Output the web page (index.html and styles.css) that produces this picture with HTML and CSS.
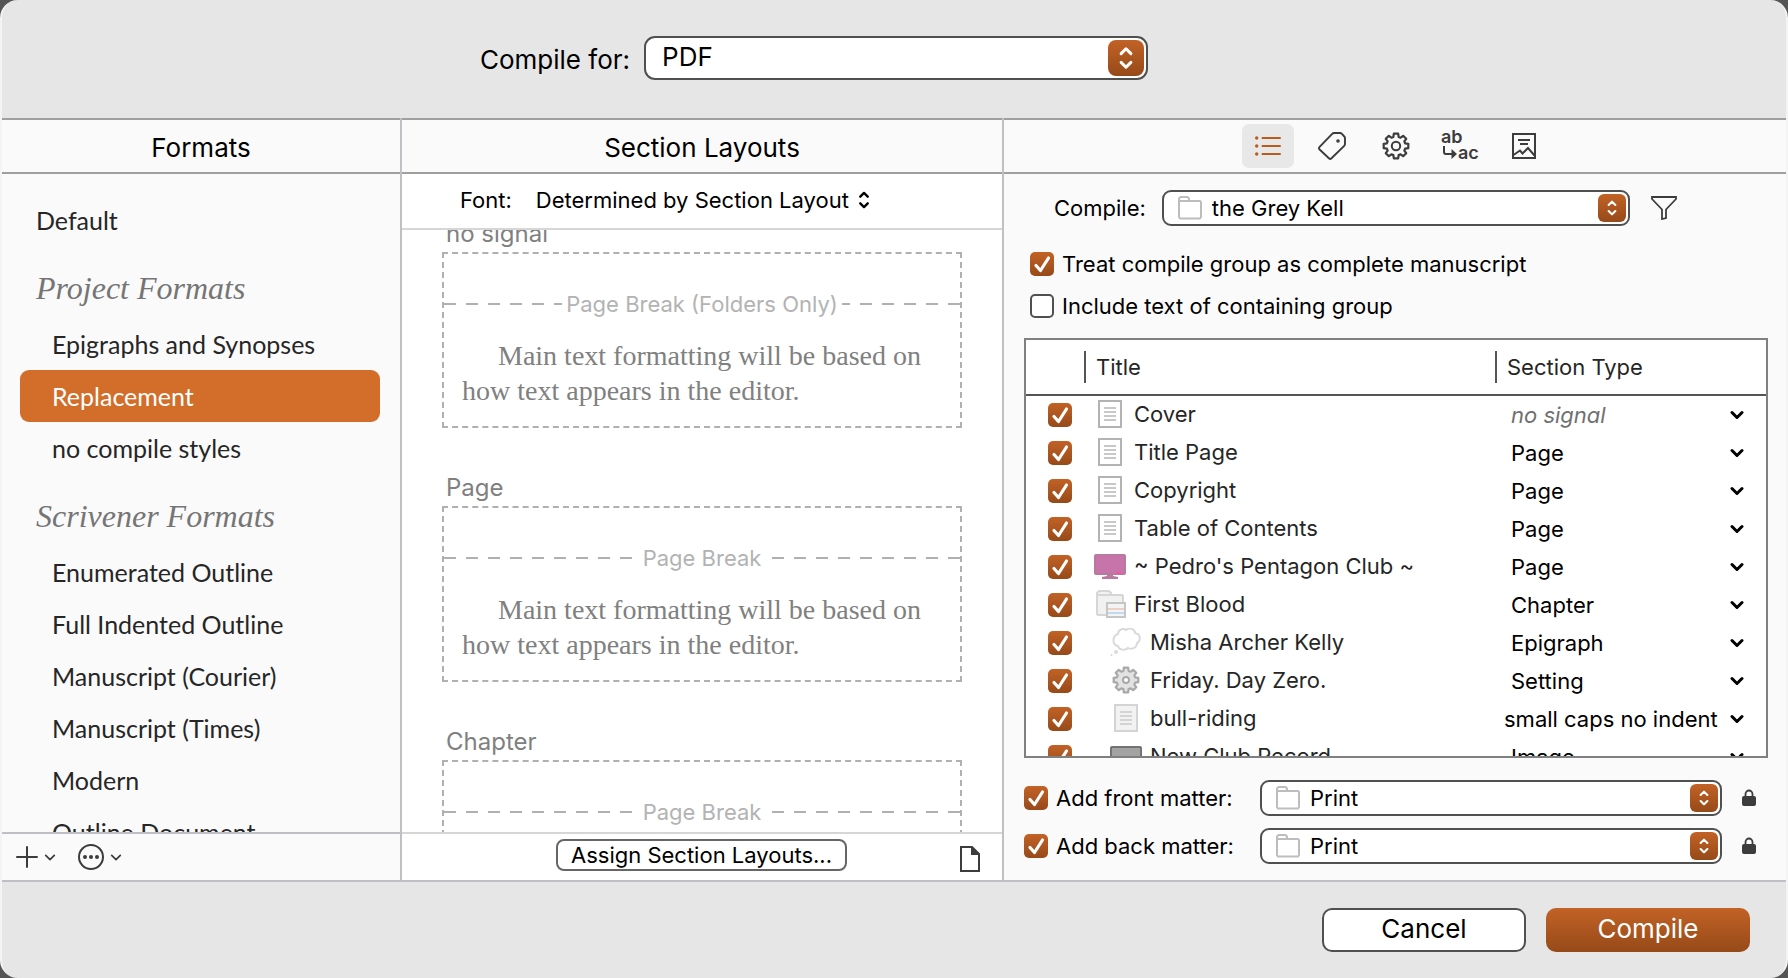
FILE: index.html
```html
<!DOCTYPE html>
<html lang="en">
<head>
  <meta charset="UTF-8" />
  <meta name="viewport" content="width=device-width, initial-scale=1.0" />
  <title>Compile</title>
  <link rel="stylesheet" href="styles.css">
</head>
<body>
  <!-- shared icons -->
  <svg class="defs" aria-hidden="true">
    <symbol id="i-updown" viewBox="0 0 14 24"><path d="M2.5 8 7 3.5 11.5 8M2.5 16 7 20.5 11.5 16" fill="none" stroke="currentColor" stroke-width="2.8" stroke-linecap="round" stroke-linejoin="round" /></symbol>
    <symbol id="i-down" viewBox="0 0 14 10"><path d="M2 2.5 7 7.5 12 2.5" fill="none" stroke="currentColor" stroke-linecap="round" stroke-linejoin="round" /></symbol>
    <symbol id="i-folder" viewBox="0 0 24 24"><path d="M1 21V2.5L2.5 1h7L11 2.5V5h11l1 1v15l-1 1.500H2z" fill="#fff" stroke="#bdbdbd" stroke-width="2" stroke-linejoin="round" /><path d="M1 5h11" stroke="#bdbdbd" stroke-width="2" /></symbol>
    <symbol id="i-doc" viewBox="0 0 24 28"><path d="M1 1h22v26H1z" fill="#fff" stroke="#b3b3b3" stroke-width="2" /><path d="M6 8h12M6 12h12M6 16h12M6 20h12" stroke="#c8c8c8" stroke-width="2" /></symbol>
    <symbol id="i-gear" viewBox="-14 -14 28 28"><path d="M9.130-2.620 12.300-2.170V2.170L9.130 2.620 8.310 4.600 10.230 7.160 7.160 10.230 4.600 8.310 2.620 9.130 2.170 12.300H-2.170L-2.620 9.130-4.600 8.310-7.160 10.230-10.230 7.160-8.310 4.600-9.130 2.620-12.300 2.170V-2.170L-9.130-2.620-8.310-4.600-10.230-7.160-7.160-10.230-4.600-8.310-2.620-9.130-2.170-12.300H2.170L2.620-9.130 4.600-8.310 7.160-10.230 10.230-7.160 8.310-4.600z" stroke="currentColor" stroke-width="2.200" stroke-linejoin="round" /></symbol>
    <symbol id="i-lock" viewBox="0 0 14 18"><path d="M3.500 8V5a3.500 3.500 0 0 1 7 0v3" fill="none" stroke="#3c3c3c" stroke-width="1.800" /><rect y="7" width="14" height="10" rx="2" fill="#3c3c3c" /></symbol>
  </svg>

  <div class="window">
    <header class="topbar">
      <label for="format">Compile for:</label>
      <div class="popup popup-large">
        <select id="format"><option>PDF</option></select>
        <span class="stepper"><svg width="18" height="26"><use href="#i-updown" /></svg></span>
      </div>
    </header>

    <main class="panes">
      <section class="pane formats">
        <h2 class="pane-title">Formats</h2>
        <nav class="format-list">
          <a href="#" class="format top">Default</a>
          <h3>Project Formats</h3>
          <a href="#" class="format">Epigraphs and Synopses</a>
          <a href="#" class="format selected">Replacement</a>
          <a href="#" class="format">no compile styles</a>
          <h3>Scrivener Formats</h3>
          <a href="#" class="format">Enumerated Outline</a>
          <a href="#" class="format">Full Indented Outline</a>
          <a href="#" class="format">Manuscript (Courier)</a>
          <a href="#" class="format">Manuscript (Times)</a>
          <a href="#" class="format">Modern</a>
          <a href="#" class="format">Outline Document</a>
        </nav>
        <div class="pane-bar">
          <button type="button" class="icon-btn" aria-label="Add format">
            <svg width="22" height="22" viewBox="0 0 22 22"><path d="M11 1v20M1 11h20" stroke="#3c3c3c" stroke-width="2" stroke-linecap="round" /></svg>
            <svg class="chev" width="12" height="9"><use href="#i-down" /></svg>
          </button>
          <button type="button" class="icon-btn" aria-label="Format options">
            <svg width="26" height="26" viewBox="0 0 26 26"><circle cx="13" cy="13" r="12" fill="none" stroke="#3c3c3c" stroke-width="2" /><g fill="#3c3c3c"><circle cx="7" cy="13" r="2" /><circle cx="13" cy="13" r="2" /><circle cx="19" cy="13" r="2" /></g></svg>
            <svg class="chev" width="12" height="9"><use href="#i-down" /></svg>
          </button>
        </div>
      </section>

      <section class="pane layouts">
        <h2 class="pane-title">Section Layouts</h2>
        <div class="font-bar">
          <label for="font">Font:</label>
          <span class="font-select">
            <select id="font"><option>Determined by Section Layout</option></select>
            <svg width="12" height="20"><use href="#i-updown" /></svg>
          </span>
        </div>
        <div class="previews">
          <article class="preview">
            <h4>no signal</h4>
            <div class="page">
              <div class="page-break tight">Page Break (Folders Only)</div>
              <p>Main text formatting will be based on how text appears in the editor.</p>
            </div>
          </article>
          <article class="preview">
            <h4>Page</h4>
            <div class="page">
              <div class="page-break">Page Break</div>
              <p>Main text formatting will be based on how text appears in the editor.</p>
            </div>
          </article>
          <article class="preview">
            <h4>Chapter</h4>
            <div class="page">
              <div class="page-break">Page Break</div>
            </div>
          </article>
        </div>
        <div class="pane-bar">
          <button type="button" class="assign">Assign Section Layouts...</button>
          <button type="button" class="icon-btn page-btn" aria-label="Page preview">
            <svg width="20" height="26" viewBox="0 0 20 26"><path d="M1 1h11l7 7v17H1z" fill="none" stroke="#3c3c3c" stroke-width="2" /><path d="M11 0v9h9z" fill="#3c3c3c" /></svg>
          </button>
        </div>
      </section>

      <section class="pane contents">
        <div class="pane-title tabs">
          <button type="button" class="tab active" aria-label="Contents">
            <svg width="26" height="20" viewBox="0 0 26 20"><path d="M7.500 2h17.500M7.500 10h17.500M7.500 18h17.500" stroke="#b95b1f" stroke-width="2" stroke-linecap="round" /><g fill="#b95b1f"><circle cx="1.700" cy="2" r="1.700" /><circle cx="1.700" cy="10" r="1.700" /><circle cx="1.700" cy="18" r="1.700" /></g></svg>
          </button>
          <button type="button" class="tab" aria-label="Metadata">
            <svg width="28" height="28" viewBox="0 0 28 28"><path d="M16 1h6q1 0 1.700.7l2.600 2.800Q27 5.200 27 6.200V12q0 1-.8 1.800L13.500 26.300q-1.300 1.200-2.600 0L1.600 17.500q-1.200-1.300 0-2.600L14.200 1.800Q15 1 16 1z" fill="none" stroke="#3c3c3c" stroke-width="1.900" stroke-linejoin="round" /><circle cx="20" cy="9" r="1.800" fill="#3c3c3c" /></svg>
          </button>
          <button type="button" class="tab" aria-label="Options">
            <svg class="gear-line" width="28" height="28"><use href="#i-gear" /><circle cx="14" cy="14" r="4.200" fill="none" stroke="#3c3c3c" stroke-width="2" /></svg>
          </button>
          <button type="button" class="tab" aria-label="Replacements">
            <svg width="38" height="32" viewBox="0 0 38 32"><text x="0" y="13" class="glyph">ab</text><text x="17" y="29" class="glyph">ac</text><path d="M3 16v6q0 2 2 2h7" fill="none" stroke="#3c3c3c" stroke-width="2" /><path d="M10.500 19v10l5.500-5z" fill="#3c3c3c" /></svg>
          </button>
          <button type="button" class="tab" aria-label="PDF settings">
            <svg width="24" height="26" viewBox="0 0 24 26"><path d="M1 1h22v24H1z" fill="none" stroke="#3c3c3c" stroke-width="2" /><path d="M6 7h12M8 11h8M1.500 22 8 17.500 10.500 20.500 16 15 22.500 22.500" fill="none" stroke="#3c3c3c" stroke-width="2" /></svg>
          </button>
        </div>

        <div class="contents-body">
          <div class="compile-row">
            <label for="group">Compile:</label>
            <div class="popup">
              <svg class="folder" width="24" height="24"><use href="#i-folder" /></svg>
              <select id="group"><option>the Grey Kell</option></select>
              <span class="stepper"><svg width="12" height="18"><use href="#i-updown" /></svg></span>
            </div>
            <button type="button" class="icon-btn" aria-label="Filter">
              <svg width="26" height="24" viewBox="0 0 26 24"><path d="M1 1h24v2L15 13.500V22l-4 1V13.500L1 3z" fill="none" stroke="#3c3c3c" stroke-width="1.800" /></svg>
            </button>
          </div>

          <label class="check"><input type="checkbox" checked /> Treat compile group as complete manuscript</label>
          <label class="check"><input type="checkbox" /> Include text of containing group</label>

          <div class="table-box">
            <table>
              <colgroup><col class="c-check" /><col /><col class="c-type" /></colgroup>
              <thead>
                <tr><th></th><th><span>Title</span></th><th><span>Section Type</span></th></tr>
              </thead>
              <tbody>
                <tr>
                  <td><input type="checkbox" aria-label="Cover" checked /></td>
                  <td><div class="item"><svg><use href="#i-doc" /></svg>Cover</div></td>
                  <td><div class="type"><select class="none" aria-label="Section type"><option>no signal</option></select><svg width="14" height="10"><use href="#i-down" /></svg></div></td>
                </tr>
                <tr>
                  <td><input type="checkbox" aria-label="Title Page" checked /></td>
                  <td><div class="item"><svg><use href="#i-doc" /></svg>Title Page</div></td>
                  <td><div class="type"><select aria-label="Section type"><option>Page</option></select><svg width="14" height="10"><use href="#i-down" /></svg></div></td>
                </tr>
                <tr>
                  <td><input type="checkbox" aria-label="Copyright" checked /></td>
                  <td><div class="item"><svg><use href="#i-doc" /></svg>Copyright</div></td>
                  <td><div class="type"><select aria-label="Section type"><option>Page</option></select><svg width="14" height="10"><use href="#i-down" /></svg></div></td>
                </tr>
                <tr>
                  <td><input type="checkbox" aria-label="Table of Contents" checked /></td>
                  <td><div class="item"><svg><use href="#i-doc" /></svg>Table of Contents</div></td>
                  <td><div class="type"><select aria-label="Section type"><option>Page</option></select><svg width="14" height="10"><use href="#i-down" /></svg></div></td>
                </tr>
                <tr>
                  <td><input type="checkbox" aria-label="Pedro's Pentagon Club" checked /></td>
                  <td><div class="item"><svg viewBox="0 0 32 28"><path d="M13 21h6v3l5 1v2H8v-2l5-1z" fill="#b8799f" /><rect x="1" y="3" width="30" height="19" rx="1" fill="#c774ab" stroke="#b8799f" stroke-width="2" /><path d="M22 21h5" stroke="#f0549c" stroke-width="2" /></svg>~ Pedro's Pentagon Club ~</div></td>
                  <td><div class="type"><select aria-label="Section type"><option>Page</option></select><svg width="14" height="10"><use href="#i-down" /></svg></div></td>
                </tr>
                <tr>
                  <td><input type="checkbox" aria-label="First Blood" checked /></td>
                  <td><div class="item"><svg viewBox="0 0 32 28"><path d="M3 5V3l2-2h10l2 2v2h11l1 1v18l-1 1H4l-1-1z" fill="#f1f1f1" stroke="#d6d6d6" stroke-width="2" /><path d="M3 5h15" stroke="#d6d6d6" stroke-width="2" /><path d="M13 13h18v14H13z" fill="#f4f4f4" stroke="#c6c6c6" stroke-width="2" /><path d="M14 19h16" stroke="#ecd0c6" stroke-width="2" /><path d="M14 23h16" stroke="#c3d9ee" stroke-width="2" /></svg>First Blood</div></td>
                  <td><div class="type"><select aria-label="Section type"><option>Chapter</option></select><svg width="14" height="10"><use href="#i-down" /></svg></div></td>
                </tr>
                <tr>
                  <td><input type="checkbox" aria-label="Misha Archer Kelly" checked /></td>
                  <td><div class="item child"><svg viewBox="0 0 32 28"><path d="M8 6C8 1 14 0 16 2 19-1 25 1 25 5 31 6 31 13 27 15 27 20 21 22 18 20 15 23 9 22 8 18 2 17 2 8 8 6z" fill="#fff" stroke="#dadada" stroke-width="2" /><circle cx="6" cy="24" r="2" fill="#dadada" /><circle cx="1.500" cy="27" r="1" fill="#dadada" /></svg>Misha Archer Kelly</div></td>
                  <td><div class="type"><select aria-label="Section type"><option>Epigraph</option></select><svg width="14" height="10"><use href="#i-down" /></svg></div></td>
                </tr>
                <tr>
                  <td><input type="checkbox" aria-label="Friday. Day Zero." checked /></td>
                  <td><div class="item child"><svg class="gear-fill" viewBox="0 0 32 28"><use href="#i-gear" x="2" width="28" height="28" /><circle cx="16" cy="14" r="3" fill="#fff" stroke="#a8a8a8" stroke-width="2" /></svg>Friday. Day Zero.</div></td>
                  <td><div class="type"><select aria-label="Section type"><option>Setting</option></select><svg width="14" height="10"><use href="#i-down" /></svg></div></td>
                </tr>
                <tr>
                  <td><input type="checkbox" aria-label="bull-riding" checked /></td>
                  <td><div class="item child"><svg viewBox="0 0 32 28"><path d="M5 1h22v26H5z" fill="#f2f2f2" stroke="#d4d4d4" stroke-width="2" /><path d="M10 8h12M10 12h12M10 16h12M10 20h12" stroke="#d4d4d4" stroke-width="2" /></svg>bull-riding</div></td>
                  <td><div class="type"><select class="long" aria-label="Section type"><option>small caps no indent</option></select><svg width="14" height="10"><use href="#i-down" /></svg></div></td>
                </tr>
                <tr>
                  <td><input type="checkbox" aria-label="New Club Record" checked /></td>
                  <td><div class="item child"><svg viewBox="0 0 32 28"><rect x="1" y="5" width="30" height="19" rx="1" fill="#a3a3a3" stroke="#737373" stroke-width="2" /></svg>New Club Record</div></td>
                  <td><div class="type"><select aria-label="Section type"><option>Image</option></select><svg width="14" height="10"><use href="#i-down" /></svg></div></td>
                </tr>
              </tbody>
            </table>
          </div>

          <div class="matter-row">
            <label class="check"><input type="checkbox" checked /> Add front matter:</label>
            <div class="popup">
              <svg class="folder" width="24" height="24"><use href="#i-folder" /></svg>
              <select aria-label="Front matter"><option>Print</option></select>
              <span class="stepper"><svg width="12" height="18"><use href="#i-updown" /></svg></span>
            </div>
            <svg width="14" height="18"><use href="#i-lock" /></svg>
          </div>
          <div class="matter-row">
            <label class="check"><input type="checkbox" checked /> Add back matter:</label>
            <div class="popup">
              <svg class="folder" width="24" height="24"><use href="#i-folder" /></svg>
              <select aria-label="Back matter"><option>Print</option></select>
              <span class="stepper"><svg width="12" height="18"><use href="#i-updown" /></svg></span>
            </div>
            <svg width="14" height="18"><use href="#i-lock" /></svg>
          </div>
        </div>
      </section>
    </main>

    <footer class="actions">
      <button type="button" class="btn">Cancel</button>
      <button type="button" class="btn primary">Compile</button>
    </footer>
  </div>
</body>
</html>
```

FILE: styles.css
```css
* {
  box-sizing: border-box;
}
body {
  margin: 0;
  background: #555;
  color: #000;
  font-family: Inter, "Liberation Sans", sans-serif;
  font-size: 22px;
  line-height: 28px;
}
button, select {
  font: inherit;
  color: inherit;
}
select {
  appearance: none;
  border: none;
  background: none;
  padding: 0;
  min-width: 0;
}
svg {
  flex: none;
  stroke-width: 3;
}
h2, h3, h4, p {
  margin: 0;
  font-weight: 400;
}
.defs {
  position: absolute;
  width: 0;
  height: 0;
}
.window {
  display: flex;
  flex-direction: column;
  height: 100vh;
  background: #e6e6e6;
  border: solid #f4f4f4;
  border-width: 0 2px;
  border-radius: 18px;
  overflow: hidden;
}

/* top bar */
.topbar {
  display: flex;
  justify-content: center;
  gap: 14px;
  height: 118px;
  padding: 36px 160px 0 0;
  font-size: 26px;
  line-height: 48px;
}

/* popup buttons */
.popup {
  display: flex;
  align-items: center;
  height: 36px;
  padding: 0 2px 0 14px;
  background: #fff;
  border: 2px solid #505050;
  border-radius: 9px;
}
.popup select {
  flex: 1;
}
.popup .folder {
  margin-right: 10px;
}
.stepper {
  display: flex;
  align-items: center;
  justify-content: center;
  width: 28px;
  height: 28px;
  border-radius: 6px;
  background: linear-gradient(#c26226, #964a19);
  color: #fff;
}
.popup-large {
  flex: 0 1 504px;
  height: 44px;
  padding-left: 16px;
  border-radius: 11px;
}
.popup-large select {
  line-height: 36px;
  padding-bottom: 2px;
}
.popup-large .stepper {
  width: 36px;
  height: 36px;
  border-radius: 8px;
}

/* panes */
.panes {
  display: grid;
  grid-template-columns: 400px 602px 1fr;
  flex: 1;
  min-height: 0;
  border-bottom: 2px solid #bdc1c6;
}
.pane {
  display: flex;
  flex-direction: column;
  min-width: 0;
  min-height: 0;
  border-right: 2px solid #bdc1c6;
  background: #fafafa;
}
.pane:last-child {
  border-right: none;
}
.pane-title {
  flex: none;
  height: 56px;
  border: solid #9f9f9f;
  border-width: 2px 0;
  background: #fafafa;
  font-size: 26px;
  line-height: 56px;
  text-align: center;
}
.pane-bar {
  display: flex;
  align-items: center;
  flex: none;
  height: 48px;
  border-top: 2px solid #bdc1c6;
}
.icon-btn {
  display: flex;
  align-items: center;
  gap: 6px;
  padding: 0;
  border: none;
  background: none;
  color: #3c3c3c;
}
.chev {
  stroke-width: 2;
}

/* formats */
.format-list {
  flex: 1;
  min-height: 0;
  overflow: hidden;
  padding: 20px 20px 0 18px;
  font-family: Lato, "Open Sans", sans-serif;
  font-size: 25px;
  line-height: 52px;
}
.format {
  display: block;
  height: 52px;
  padding-left: 32px;
  border-radius: 9px;
  color: #262626;
  text-decoration: none;
}
.format.top {
  padding-left: 16px;
}
.format.selected {
  background: #d36d2a;
  color: #fff;
}
.format-list h3 {
  height: 72px;
  padding: 16px 0 0 16px;
  font-family: "Liberation Serif", serif;
  font-size: 32px;
  font-style: italic;
  color: #757575;
}
.formats .pane-bar {
  gap: 22px;
  padding-left: 14px;
}

/* section layouts */
.layouts {
  background: #fff;
}
.font-bar {
  display: flex;
  align-items: center;
  flex: none;
  gap: 24px;
  height: 56px;
  padding: 0 58px 2px;
  border-bottom: 2px solid #d6d6d6;
}
.font-select {
  display: flex;
  align-items: center;
  gap: 8px;
}
.previews {
  flex: 1;
  min-height: 0;
  overflow: hidden;
  padding: 0 40px;
}
.preview {
  height: 254px;
}
.preview h4 {
  margin: 0 0 4px 4px;
  font-size: 24px;
  line-height: 28px;
  color: #808080;
}
.preview:first-child {
  margin-top: -10px;
}
.page {
  height: 176px;
  border: 2px dashed #b0b0b0;
}
.page-break {
  display: flex;
  align-items: center;
  gap: 10px;
  height: 28px;
  margin-top: 36px;
  color: #b3b3b3;
  white-space: nowrap;
}
.page-break.tight {
  gap: 4px;
}
.page-break::before,
.page-break::after {
  content: "";
  flex: 1;
  height: 2px;
  background: repeating-linear-gradient(90deg, #b0b0b0 0 12px, transparent 12px 22px);
}
.page-break::after {
  background: repeating-linear-gradient(270deg, #b0b0b0 0 12px, transparent 12px 22px);
}
.page p {
  padding: 20px 4px 0 18px;
  font-family: "Liberation Serif", serif;
  font-size: 28px;
  line-height: 35px;
  text-indent: 36px;
  color: #808080;
}
.layouts .pane-bar {
  justify-content: space-between;
  padding: 0 22px 0 154px;
  border-color: #d6d6d6;
}
.assign {
  height: 32px;
  margin-bottom: 4px;
  padding: 0 13px;
  border: 2px solid #666;
  border-radius: 8px;
  background: #fff;
  line-height: 26px;
}
.page-btn {
  margin-top: 4px;
}

/* contents */
.tabs {
  display: flex;
  align-items: center;
  justify-content: center;
  gap: 12px;
  padding-left: 2px;
}
.tab {
  display: flex;
  align-items: center;
  justify-content: center;
  width: 52px;
  height: 44px;
  padding: 0;
  border: none;
  border-radius: 7px;
  background: none;
}
.tab.active {
  background: #e8e8e8;
}
.gear-line {
  color: #3c3c3c;
  fill: none;
}
.gear-fill {
  color: #a8a8a8;
  fill: #e2e2e2;
}
.glyph {
  font-size: 18px;
  font-weight: 600;
  line-height: 18px;
  fill: #3c3c3c;
}
.contents-body {
  display: flex;
  flex-direction: column;
  flex: 1;
  min-height: 0;
  padding: 16px 18px 16px 20px;
}
.compile-row {
  display: flex;
  align-items: center;
  gap: 16px;
  padding: 0 91px 0 30px;
}
.compile-row .popup {
  flex: 1;
  margin-right: 5px;
}
.check {
  display: flex;
  align-items: center;
  gap: 8px;
}
.contents-body > .check {
  height: 24px;
  margin: 18px 0 0 6px;
}
.contents-body > .compile-row + .check {
  margin-top: 26px;
}
input[type="checkbox"] {
  appearance: none;
  flex: none;
  display: block;
  width: 24px;
  height: 24px;
  margin: 0;
  border: 2px solid #505050;
  border-radius: 5px;
  background: #fff;
}
input[type="checkbox"]:checked {
  border: none;
  background: url("data:image/svg+xml,%3Csvg xmlns='http://www.w3.org/2000/svg' viewBox='0 0 24 24'%3E%3Cpath d='M6 13.500l4.500 5L18.500 6' fill='none' stroke='%23fff' stroke-width='3.200' stroke-linecap='round' stroke-linejoin='round'/%3E%3C/svg%3E"), linear-gradient(#c26226, #964a19);
}
.table-box {
  flex: 1;
  min-height: 0;
  margin: 20px 0 22px;
  overflow: hidden;
  border: 2px solid #808080;
  background: #fff;
}
table {
  width: 100%;
  border-collapse: separate;
  border-spacing: 0;
  table-layout: fixed;
  color: #262626;
}
.c-check {
  width: 58px;
}
.c-type {
  width: 271px;
}
th {
  height: 56px;
  padding: 0;
  border-bottom: 2px solid #555;
  font-weight: 400;
  text-align: left;
}
th span {
  display: block;
  padding-left: 10px;
  border-left: 2px solid #555;
  line-height: 32px;
}
td {
  height: 38px;
  padding: 0;
}
td:first-child {
  padding-left: 22px;
}
.item {
  display: flex;
  align-items: center;
  gap: 8px;
  padding-left: 10px;
  margin-bottom: 2px;
  white-space: nowrap;
}
.item svg {
  width: 32px;
  height: 28px;
}
.item.child {
  padding-left: 26px;
}
.type {
  display: flex;
  align-items: center;
  padding: 0 22px 0 7px;
  color: #000;
}
.type select {
  flex: 1;
  padding-left: 9px;
}
.type .long {
  padding-left: 2px;
}
.type .none {
  font-style: italic;
  color: #707070;
}
.matter-row {
  display: flex;
  align-items: center;
  padding-right: 12px;
  margin-bottom: 12px;
}
.matter-row:last-child {
  margin-bottom: 0;
}
.matter-row .check {
  width: 236px;
}
.matter-row .popup {
  flex: 1;
  margin-right: 20px;
}

/* footer */
.actions {
  display: flex;
  justify-content: flex-end;
  gap: 20px;
  height: 96px;
  padding: 26px 36px 0;
}
.btn {
  width: 204px;
  height: 44px;
  padding: 0 0 2px;
  border: 2px solid #505050;
  border-radius: 10px;
  background: #fff;
  font-size: 26px;
}
.btn.primary {
  border: none;
  background: linear-gradient(#c26226, #964a19);
  color: #fff;
}
```
